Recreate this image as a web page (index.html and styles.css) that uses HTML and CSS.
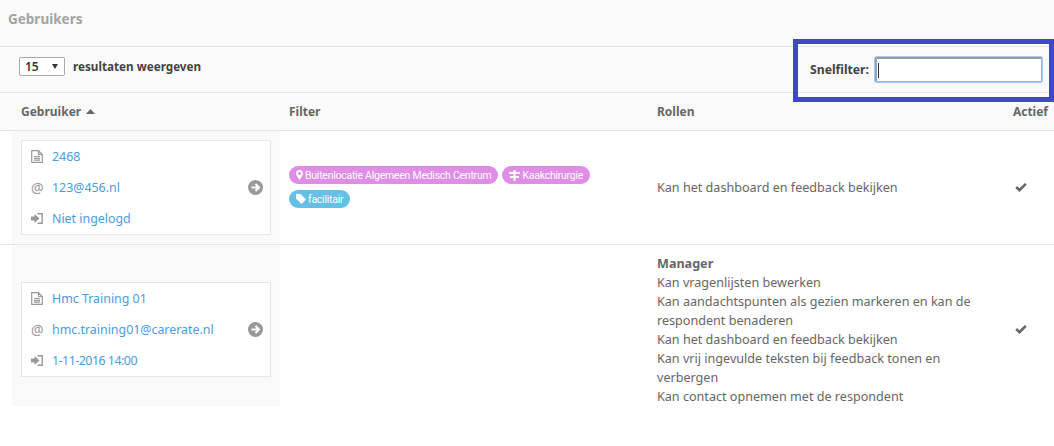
FILE: index.html
```html
<!DOCTYPE html>
<html lang="nl">
<head>
<meta charset="utf-8">
<title>Gebruikers</title>
<link rel="stylesheet" href="styles.css">
</head>
<body>
<header class="page-title"><h1>Gebruikers</h1></header>
<div class="toolbar">
  <div class="length">
    <span class="select"><span>15</span><svg class="caret" width="6" height="5" viewBox="0 0 6 5"><path d="M0 0h6L3 5z"/></svg></span>
    <span class="length-label">resultaten weergeven</span>
  </div>
  <div class="filter">
    <label class="filter-label">Snelfilter:</label>
    <span class="filter-input"><i class="text-cursor"></i></span>
  </div>
</div>
<div class="highlight"></div>
<table class="users">
  <thead>
    <tr>
      <th class="col-user">Gebruiker <svg class="sort" width="9" height="5" viewBox="0 0 9 5"><path d="M4.500 0 9 5H0z"/></svg></th>
      <th class="col-filter">Filter</th>
      <th class="col-roles">Rollen</th>
      <th class="col-active">Actief</th>
    </tr>
  </thead>
  <tbody>
    <tr class="row-short">
      <td class="cell-user">
        <div class="card">
          <div class="card-lines">
            <div class="line"><svg class="ico" width="12" height="13" viewBox="0 0 12 13"><path d="M.7.700h6.800l3.800 3.800v7.800H.7zM7.500.7v3.800h3.800M3 6.500h6M3 8.300h6M3 10.100h6" fill="none" stroke="#999" stroke-width="1.200"/></svg><a>2468</a></div>
            <div class="line"><span class="at">@</span><a>123@456.nl</a></div>
            <div class="line"><svg class="ico" width="12" height="11" viewBox="0 0 12 11"><path d="M0 3.500h3.500V1L8.500 5.500 3.500 10V7.500H0z" fill="#999"/><path d="M6.500.8h4.700v9.400H6.500" fill="none" stroke="#999" stroke-width="1.400"/></svg><a>Niet ingelogd</a></div>
          </div>
          <svg class="go" width="15" height="15" viewBox="0 0 15 15"><circle cx="7.500" cy="7.500" r="7.500" fill="#999"/><path d="M3.500 7.500h7M7.500 4l3.500 3.500L7.500 11" fill="none" stroke="#fff" stroke-width="2"/></svg>
        </div>
      </td>
      <td class="cell-filter">
        <div class="tags">
          <span class="tag tag-pink"><svg class="tag-ico" width="7" height="10" viewBox="0 0 7 10"><path fill-rule="evenodd" d="M3.500 0A3.500 3.500 0 0 1 7 3.500C7 5.500 3.500 10 3.500 10S0 5.500 0 3.500A3.500 3.500 0 0 1 3.500 0zm0 2a1.500 1.500 0 1 0 0 3 1.500 1.500 0 0 0 0-3z" fill="#fff"/></svg>Buitenlocatie Algemeen Medisch Centrum</span>
          <span class="tag tag-pink"><svg class="tag-ico" width="11" height="11" viewBox="0 0 11 11"><path d="M4.500 0h2v2H11v2H6.500v2H10v2H6.500v3h-2V8H1V6h3.500V4H0V2h4.500z" fill="#fff"/></svg>Kaakchirurgie</span>
          <span class="tag tag-blue"><svg class="tag-ico" width="10" height="10" viewBox="0 0 10 10"><path d="M0 0h4.500L10 5.500 5.500 10 0 4.500z" fill="#fff"/></svg>facilitair</span>
        </div>
      </td>
      <td class="cell-roles">Kan het dashboard en feedback bekijken</td>
      <td class="cell-active"><svg class="check" width="12" height="10" viewBox="0 0 12 10"><path d="M1.200 5 4.500 8.200 10.800 1.800" fill="none" stroke="#666" stroke-width="2.600"/></svg></td>
    </tr>
    <tr class="row-tall">
      <td class="cell-user">
        <div class="card">
          <div class="card-lines">
            <div class="line"><svg class="ico" width="12" height="13" viewBox="0 0 12 13"><path d="M.7.700h6.800l3.800 3.800v7.800H.7zM7.500.7v3.800h3.800M3 6.500h6M3 8.300h6M3 10.100h6" fill="none" stroke="#999" stroke-width="1.200"/></svg><a>Hmc Training 01</a></div>
            <div class="line"><span class="at">@</span><a>hmc.training01@carerate.nl</a></div>
            <div class="line"><svg class="ico" width="12" height="11" viewBox="0 0 12 11"><path d="M0 3.500h3.500V1L8.500 5.500 3.500 10V7.500H0z" fill="#999"/><path d="M6.500.8h4.700v9.400H6.500" fill="none" stroke="#999" stroke-width="1.400"/></svg><a class="date">1-11-2016 14:00</a></div>
          </div>
          <svg class="go" width="15" height="15" viewBox="0 0 15 15"><circle cx="7.500" cy="7.500" r="7.500" fill="#999"/><path d="M3.500 7.500h7M7.500 4l3.500 3.500L7.500 11" fill="none" stroke="#fff" stroke-width="2"/></svg>
        </div>
      </td>
      <td class="cell-filter"></td>
      <td class="cell-roles">
        <strong>Manager</strong><br>
        Kan vragenlijsten bewerken<br>
        Kan aandachtspunten als gezien markeren en kan de respondent benaderen<br>
        Kan het dashboard en feedback bekijken<br>
        Kan vrij ingevulde teksten bij feedback tonen en verbergen<br>
        Kan contact opnemen met de respondent
      </td>
      <td class="cell-active"><svg class="check" width="12" height="10" viewBox="0 0 12 10"><path d="M1.200 5 4.500 8.200 10.800 1.800" fill="none" stroke="#666" stroke-width="2.600"/></svg></td>
    </tr>
  </tbody>
</table>
</body>
</html>
```
FILE: styles.css
```css
* { box-sizing: border-box; }
html, body { margin: 0; padding: 0; }
body {
  position: relative;
  background: #fff;
  color: #666;
  font: 12.6px/19px "Noto Sans", "Open Sans", sans-serif;
  overflow: hidden;
  height: 446px;
}
.page-title {
  height: 47px;
  background: #fafafa;
  border-bottom: 1px solid #e6e6e6;
  padding: 10px 8px 0;
}
.page-title h1 { margin: 0; font-size: 13.5px; line-height: 18px; font-weight: 700; color: #a3a3a3; }
.toolbar {
  height: 46px;
  background: #fafafa;
  border-bottom: 1px solid #e6e6e6;
  display: flex;
  justify-content: space-between;
  padding: 0 12px 0 19px;
}
.length { display: flex; align-items: center; gap: 8px; margin-top: -7px; }
.select {
  width: 46px; height: 19px;
  border: 1px solid #a9a9a9;
  border-radius: 2px;
  background: #fff;
  display: flex; justify-content: space-between; align-items: center;
  padding: 0 6px 0 5px;
  color: #333; font-size: 12px; font-weight: 600;
}
.caret { fill: #333; }
.length-label { color: #444; font-weight: 700; font-size: 11.7px; }
.filter { display: flex; align-items: center; gap: 6px; margin-top: -1px; }
.filter-label { color: #444; font-weight: 700; font-size: 12.2px; }
.filter-input {
  width: 167px; height: 25px;
  background: #fff;
  border: 1px solid #8fb4ee;
  border-top: 2px solid #9a9a9a;
  border-left: 2px solid #8fa4c4;
  border-radius: 2px;
  box-shadow: 0 0 0 1px #a9c5f2;
  padding: 4px 0 0 1px;
  display: flex;
}
.text-cursor { width: 1px; height: 15px; background: #333; }
.highlight {
  position: absolute;
  left: 793px; top: 39px;
  width: 261px; height: 63px;
  border: 5px solid #3f48cc;
  pointer-events: none;
}
.users { width: 1054px; border-collapse: collapse; table-layout: fixed; }
.users th {
  height: 37px;
  background: #fafafa;
  border-bottom: 1px solid #e6e6e6;
  text-align: left;
  font-size: 12px;
  font-weight: 700;
  color: #666;
  padding: 0 9px;
}
.users td { border-bottom: 1px solid #e6e6e6; vertical-align: middle; padding: 0 9px; }
.users tr:last-child td { border-bottom: 0; }
.col-user { width: 280px; }
.users .col-user { padding-left: 21px; }
.col-filter { width: 368px; }
.col-roles { width: 356px; }
.col-active { width: 50px; }
.users .col-active { padding: 0 6px 0 0; text-align: right; }
.sort { fill: #666; margin: 0 0 2px 2px; }
.users td.cell-user { padding: 9px 9px 9px 21px; position: relative; }
.users .row-tall td.cell-user { padding-top: 17px; }
.cell-user::before {
  content: ""; position: absolute; z-index: -1; left: 12px; right: 0; top: 0; bottom: 0; background: #f9f9f9;
}
.card {
  width: 250px; height: 95px;
  background: #fff;
  border: 1px solid #e6e6e6;
  display: flex; align-items: center; justify-content: space-between;
  padding: 0 7px 0 9px;
}
.card-lines { display: flex; flex-direction: column; gap: 12px; }
.line { display: flex; align-items: center; height: 19px; font-size: 12.4px; }
.line a { color: #4b9be0; }
.line .date { letter-spacing: -.5px; }
.ico { width: 12px; margin-right: 9px; flex: none; }
.at { width: 12px; margin-right: 9px; color: #999; font-size: 14px; }
.tags { display: flex; flex-wrap: wrap; gap: 6px 4px; }
.tag {
  height: 18px; border-radius: 9px; padding: 0 7px;
  color: #fff; font-family: "Roboto", sans-serif; font-size: 10.5px; letter-spacing: -.25px; line-height: 17px;
  display: inline-flex; align-items: center;
}
.tag-pink { background: #e08de8; }
.tag-blue { background: #66c0e6; }
.tag-ico { margin-right: 2px; flex: none; }
.users td.cell-active { text-align: right; padding: 0 27px 0 0; }
.users .row-tall td.cell-active { padding-top: 8px; }
.users .row-tall td.cell-roles { padding: 9px 30px 0 9px; }
.users .row-short { height: 114px; }
strong { font-weight: 700; }
```
